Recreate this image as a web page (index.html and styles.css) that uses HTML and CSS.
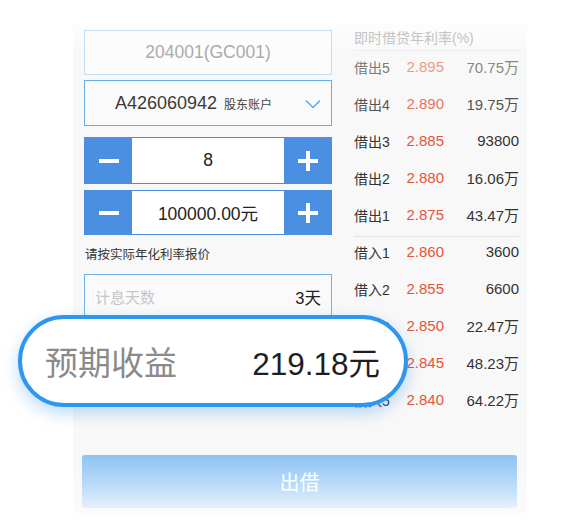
FILE: index.html
```html
<!DOCTYPE html>
<html lang="zh-CN">
<head>
<meta charset="utf-8">
<title>出借</title>
<link rel="stylesheet" href="styles.css">
</head>
<body>
<div class="page">
  <div class="screen">
    <div class="content">
      <div class="form">
        <div class="field code-box">204001(GC001)</div>
        <div class="field account-box">
          <span class="account"><span class="acc-no">A426060942</span><span class="acc-label">股东账户</span></span>
          <svg class="chevron" width="16" height="10" viewBox="0 0 16 10"><polyline points="1,1.5 8,8.5 15,1.5" fill="none" stroke="#5aaae6" stroke-width="1.5"/></svg>
        </div>
        <div class="stepper stepper-qty">
          <div class="step-btn"><svg width="20" height="20" viewBox="0 0 20 20"><rect x="0" y="8" width="20" height="4" fill="#fff"/></svg></div>
          <div class="step-val">8</div>
          <div class="step-btn"><svg width="20" height="20" viewBox="0 0 20 20"><rect x="0" y="8" width="20" height="4" fill="#fff"/><rect x="8" y="0" width="4" height="20" fill="#fff"/></svg></div>
        </div>
        <div class="stepper stepper-amt">
          <div class="step-btn"><svg width="20" height="20" viewBox="0 0 20 20"><rect x="0" y="8" width="20" height="4" fill="#fff"/></svg></div>
          <div class="step-val">100000.00元</div>
          <div class="step-btn"><svg width="20" height="20" viewBox="0 0 20 20"><rect x="0" y="8" width="20" height="4" fill="#fff"/><rect x="8" y="0" width="4" height="20" fill="#fff"/></svg></div>
        </div>
        <div class="hint">请按实际年化利率报价</div>
        <div class="field days-box"><span class="days-label">计息天数</span><span class="days-val">3天</span></div>
      </div>
      <div class="book">
        <div class="book-head">即时借贷年利率(%)</div>
        <div class="group sell">
          <div class="row r-fade1"><span class="lbl">借出5</span><span class="rate">2.895</span><span class="vol">70.75万</span></div>
          <div class="row r-fade2"><span class="lbl">借出4</span><span class="rate">2.890</span><span class="vol">19.75万</span></div>
          <div class="row"><span class="lbl">借出3</span><span class="rate">2.885</span><span class="vol">93800</span></div>
          <div class="row"><span class="lbl">借出2</span><span class="rate">2.880</span><span class="vol">16.06万</span></div>
          <div class="row"><span class="lbl">借出1</span><span class="rate">2.875</span><span class="vol">43.47万</span></div>
        </div>
        <div class="sep"></div>
        <div class="group buy">
          <div class="row"><span class="lbl">借入1</span><span class="rate">2.860</span><span class="vol">3600</span></div>
          <div class="row"><span class="lbl">借入2</span><span class="rate">2.855</span><span class="vol">6600</span></div>
          <div class="row"><span class="lbl">借入3</span><span class="rate">2.850</span><span class="vol">22.47万</span></div>
          <div class="row"><span class="lbl">借入4</span><span class="rate">2.845</span><span class="vol">48.23万</span></div>
          <div class="row"><span class="lbl">借入5</span><span class="rate">2.840</span><span class="vol">64.22万</span></div>
        </div>
      </div>
    </div>
    <button class="lend-btn">出借</button>
  </div>
  <div class="yield-pill">
    <span class="yield-label">预期收益</span>
    <span class="yield-val">219.18元</span>
  </div>
</div>
</body>
</html>
```

FILE: styles.css
```css
* { box-sizing: border-box; }

html, body {
  margin: 0;
  padding: 0;
  background: #ffffff;
}

body {
  font-family: "Liberation Sans", "Noto Sans CJK SC", sans-serif;
  color: #333;
}

.page {
  position: relative;
  width: 575px;
  height: 525px;
  overflow: hidden;
  padding-top: 24px;
  padding-left: 73px;
}

.screen {
  width: 454px;
  height: 489px;
  display: flex;
  flex-direction: column;
  padding: 0 10px 5px 9px;
  background: linear-gradient(to bottom, #fdfdfd 0, #f8f8f8 30px, #f8f8f8 440px, #fbfbfb 100%);
}

.content {
  display: grid;
  grid-template-columns: 248px 165px;
  column-gap: 22px;
  margin-left: 2px;
  flex: 1;
}

/* ---------- left form ---------- */
.form {
  padding-top: 6px;
  display: flex;
  flex-direction: column;
}

.field {
  border: 1px solid #64ade6;
  background: #fafafa;
  display: flex;
  align-items: center;
}

.code-box {
  height: 45px;
  justify-content: center;
  border-color: #c4dff4;
  background: #fcfcfc;
  color: #ababab;
  font-size: 17.5px;
}

.account-box {
  margin-top: 5px;
  height: 46px;
  justify-content: space-between;
  padding: 0 10px 0 30px;
}

.acc-no {
  font-size: 18px;
  color: #3a3a3a;
}

.acc-label {
  font-size: 12px;
  color: #444;
  margin-left: 7px;
}

.chevron {
  margin-top: 1px;
}

.stepper {
  display: grid;
  grid-template-columns: 47px 1fr 47px;
  border: 1px solid #4b8fe2;
  background: #fff;
}

.stepper-qty {
  margin-top: 11px;
  height: 47px;
}

.stepper-amt {
  margin-top: 6px;
  height: 45px;
}

.step-btn {
  background: #4b8fe2;
  display: flex;
  align-items: center;
  justify-content: center;
}

.step-val {
  display: flex;
  align-items: center;
  justify-content: center;
  font-size: 17.5px;
  color: #222;
}

.hint {
  margin-top: 12px;
  font-size: 12.5px;
  line-height: 16px;
  color: #333;
  padding-left: 1px;
}

.days-box {
  margin-top: 11px;
  height: 45px;
  justify-content: space-between;
  padding: 0 10px;
  border-color: #72b4ea;
}

.days-label {
  font-size: 15px;
  color: #c6c6c6;
}

.days-val {
  font-size: 16.5px;
  color: #222;
}

/* ---------- right order book ---------- */
.book {
  display: flex;
  flex-direction: column;
}

.book-head {
  padding-top: 6px;
  padding-bottom: 4px;
  line-height: 16px;
  font-size: 14px;
  color: #c4c4c4;
  border-bottom: 1px solid #ececec;
}

.group.sell {
  margin-top: -3px;
}

.sep {
  margin-top: 3px;
  height: 1px;
  background: #e2e2e2;
}

.group.buy {
  margin-top: -4px;
}

.row {
  display: grid;
  grid-template-columns: 50px 40px 75px;
  height: 37px;
  align-items: center;
}

.lbl {
  font-size: 14px;
  color: #333;
}

.rate {
  text-align: right;
  font-size: 15px;
  color: #e4553a;
}

.vol {
  text-align: right;
  font-size: 15px;
  color: #333;
}

.row.r-fade1 .lbl { color: #7a7a7a; }
.row.r-fade1 .rate { color: #ef9a86; }
.row.r-fade1 .vol { color: #888; }
.row.r-fade2 .lbl { color: #555; }
.row.r-fade2 .rate { color: #e77460; }
.row.r-fade2 .vol { color: #555; }

/* ---------- bottom button ---------- */
.lend-btn {
  height: 53px;
  width: 100%;
  border: none;
  border-radius: 3px;
  background: linear-gradient(to bottom, #8ec2f4 0%, #b9dbf8 55%, #e6f1fc 100%);
  color: #fff;
  font-family: "Liberation Sans", "Noto Sans CJK SC", sans-serif;
  font-size: 20px;
  padding: 0;
}

/* ---------- floating yield pill ---------- */
.yield-pill {
  position: absolute;
  left: 18px;
  top: 315px;
  width: 390px;
  height: 92px;
  border: 4px solid #2d97ef;
  border-radius: 46px;
  background: #fff;
  box-shadow: 0 6px 16px rgba(60, 150, 240, 0.35);
  display: flex;
  align-items: center;
  justify-content: space-between;
  padding: 0 24px 0 23px;
}

.yield-label {
  font-size: 33px;
  color: #8a8a8a;
}

.yield-val {
  font-size: 31.5px;
  color: #1e1e1e;
}
```
